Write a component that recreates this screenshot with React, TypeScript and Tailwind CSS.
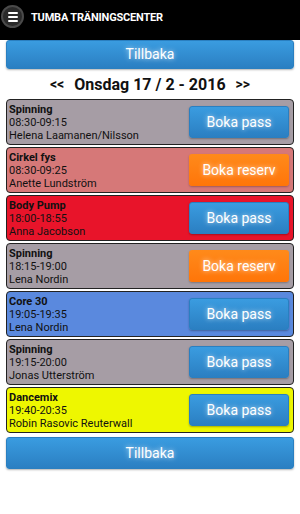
type Pass = {
  name: string;
  time: string;
  leader: string;
  bg: string;
  reserv?: boolean;
};

const passes: Pass[] = [
  { name: "Spinning", time: "08:30-09:15", leader: "Helena Laamanen/Nilsson", bg: "bg-[#a69da5]" },
  { name: "Cirkel fys", time: "08:30-09:25", leader: "Anette Lundström", bg: "bg-[#d67878]", reserv: true },
  { name: "Body Pump", time: "18:00-18:55", leader: "Anna Jacobson", bg: "bg-[#e8142a]" },
  { name: "Spinning", time: "18:15-19:00", leader: "Lena Nordin", bg: "bg-[#a69da5]", reserv: true },
  { name: "Core 30", time: "19:05-19:35", leader: "Lena Nordin", bg: "bg-[#5a89de]" },
  { name: "Spinning", time: "19:15-20:00", leader: "Jonas Utterström", bg: "bg-[#a69da5]" },
  { name: "Dancemix", time: "19:40-20:35", leader: "Robin Rasovic Reuterwall", bg: "bg-[#eef700]" },
];

const glow = "[text-shadow:0_0_5px_rgba(255,255,255,0.8)]";

function BlueButton({ label, className = "" }: { label: string; className?: string }) {
  return (
    <button
      className={`rounded-[3px] border border-[#2a7fc0] bg-gradient-to-b from-[#3a9ce0] to-[#2b7fc2] text-white shadow-[0_1px_2px_rgba(0,0,0,0.3)] ${glow} ${className}`}
    >
      {label}
    </button>
  );
}

export default function App() {
  return (
    <div className="h-[514px] w-[300px] bg-white font-['Roboto',sans-serif]">
      <header className="flex h-[40px] items-start bg-black pl-[1px] pt-[5px]">
        <div className="flex h-[23px] w-[23px] items-center justify-center rounded-full border-2 border-[#4a4a4a] bg-[#2a2a2a]">
          <div className="flex flex-col gap-[2px]">
            <span className="block h-[2px] w-[10px] rounded bg-white" />
            <span className="block h-[2px] w-[10px] rounded bg-white" />
            <span className="block h-[2px] w-[10px] rounded bg-white" />
          </div>
        </div>
        <h1 className="ml-[7px] mt-[5px] text-[11px] font-bold tracking-[-0.2px] text-white">
          TUMBA TRÄNINGSCENTER
        </h1>
      </header>

      <div className="px-[6px]">
        <BlueButton label="Tillbaka" className="h-[29px] w-full text-[14px]" />

        <div className="flex h-[30px] items-center justify-center gap-[10px] pt-[1px] text-[16px] font-bold text-[#111]">
          <span className="text-[14px]">&lt;&lt;</span>
          <span>Onsdag 17 / 2 - 2016</span>
          <span className="text-[14px]">&gt;&gt;</span>
        </div>

        <div className="flex flex-col gap-[2px]">
          {passes.map((p, i) => (
            <div
              key={i}
              className={`flex h-[46px] items-center justify-between rounded-[4px] border border-[#222] pl-[2px] pr-[4px] ${p.bg}`}
            >
              <div className="text-[11px] leading-[13px] text-[#111]">
                <p className="font-bold">{p.name}</p>
                <p>{p.time}</p>
                <p>{p.leader}</p>
              </div>
              {p.reserv ? (
                <button
                  className={`h-[32px] w-[100px] rounded-[3px] bg-gradient-to-b from-[#ff8a1a] to-[#ff7508] text-[14px] text-white shadow-[0_1px_2px_rgba(0,0,0,0.25)] ${glow}`}
                >
                  Boka reserv
                </button>
              ) : (
                <BlueButton label="Boka pass" className="h-[32px] w-[100px] text-[14px]" />
              )}
            </div>
          ))}
        </div>

        <BlueButton label="Tillbaka" className="mt-[4px] h-[32px] w-full text-[14px]" />
      </div>
    </div>
  );
}
